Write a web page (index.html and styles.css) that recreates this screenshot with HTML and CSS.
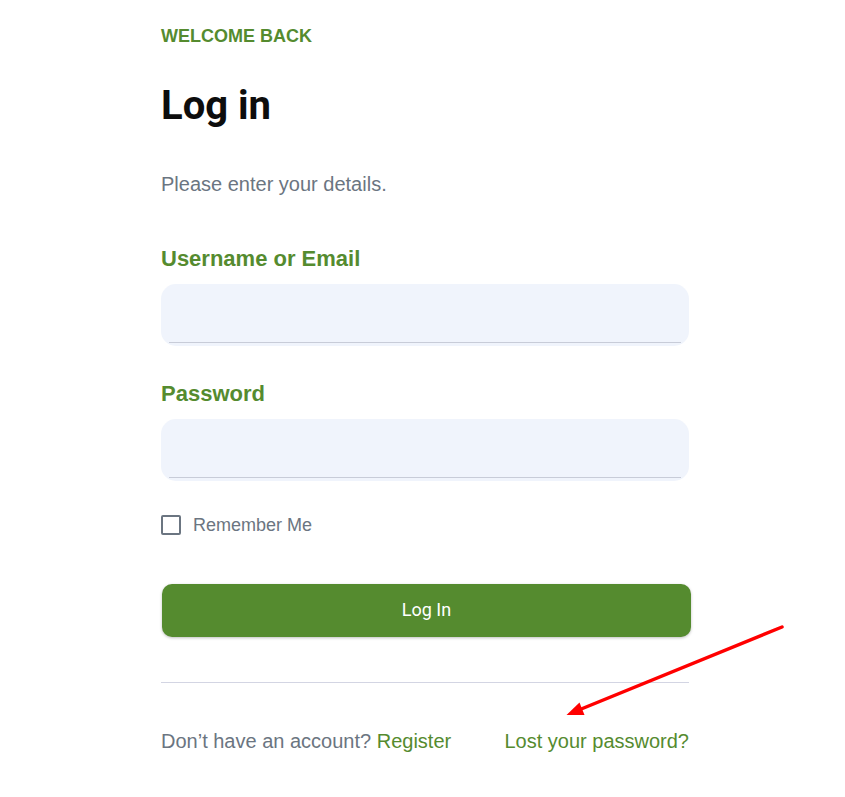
FILE: index.html
```html
<!DOCTYPE html>
<html lang="en">
<head>
<meta charset="utf-8">
<title>Log in</title>
<link rel="stylesheet" href="styles.css">
</head>
<body>
<main class="login">
  <p class="eyebrow">WELCOME BACK</p>
  <h1 class="title">Log in</h1>
  <p class="intro">Please enter your details.</p>
  <form class="form">
    <label class="label" for="user">Username or Email</label>
    <input class="field" id="user" type="text">
    <label class="label label-pass" for="pass">Password</label>
    <input class="field" id="pass" type="password">
    <label class="remember"><span class="box"></span><span>Remember Me</span></label>
    <button class="submit" type="button">Log In</button>
  </form>
  <hr class="divider">
  <div class="footer">
    <p class="register">Don’t have an account? <a href="#">Register</a></p>
    <a class="lost" href="#">Lost your password?</a>
  </div>
</main>
<svg class="arrow" width="845" height="797" viewBox="0 0 845 797">
  <line x1="782" y1="627" x2="580" y2="709.5" stroke="#ff0000" stroke-width="3.5" stroke-linecap="round"/>
  <polygon points="566.5,715 584.5,715 579.5,702.5" fill="#ff0000"/>
</svg>
</body>
</html>
```
FILE: styles.css
```css
* { box-sizing: border-box; }
html, body { margin: 0; padding: 0; background: #fff; }
body { font-family: "Liberation Sans", Arial, sans-serif; position: relative; }
.login {
  width: 528px;
  margin-left: 161px;
  padding-top: 25px;
}
.eyebrow {
  margin: 0;
  font-size: 18px;
  line-height: 22px;
  font-weight: 700;
  color: #558b2f;
}
.title {
  margin: 35px 0 0;
  font-family: Roboto, "Liberation Sans", sans-serif;
  font-size: 40px;
  line-height: 48px;
  font-weight: 700;
  color: #0d0d0d;
}
.intro {
  margin: 42px 0 0;
  font-size: 20px;
  line-height: 24px;
  color: #6b7581;
}
.form { display: flex; flex-direction: column; }
.label {
  margin-top: 50px;
  font-size: 22px;
  line-height: 26px;
  font-weight: 700;
  color: #558b2f;
}
.label-pass { margin-top: 35px; }
.field {
  margin-top: 12px;
  height: 62px;
  width: 100%;
  border: 0;
  border-radius: 15px;
  background: linear-gradient(#c8ccd8, #c8ccd8) no-repeat 50% calc(100% - 3px) / calc(100% - 16px) 1px, #f0f4fc;
  outline: none;
}
.remember {
  margin-top: 34px;
  display: flex;
  align-items: center;
  gap: 12px;
  height: 20px;
  font-size: 18px;
  color: #6b7581;
}
.box {
  width: 20px;
  height: 20px;
  border: 2px solid #6b7581;
  border-radius: 2px;
}
.submit {
  margin-top: 49px;
  margin-left: 1px;
  width: 529px;
  height: 53px;
  padding: 0 0 3px;
  border: 0;
  border-radius: 10px;
  background: #558b2f;
  color: #fff;
  font-family: Roboto, "Liberation Sans", sans-serif;
  font-size: 18px;
  box-shadow: 0 1px 3px rgba(0,0,0,0.25);
}
.divider {
  margin: 45px 0 0;
  border: 0;
  border-top: 1px solid #d3d5e3;
}
.footer {
  margin-top: 46px;
  display: flex;
  justify-content: space-between;
  font-size: 20px;
  line-height: 24px;
}
.register { margin: 0; color: #6b7581; }
.footer a { color: #558b2f; text-decoration: none; }
.arrow { position: absolute; left: 0; top: 0; pointer-events: none; }
```
